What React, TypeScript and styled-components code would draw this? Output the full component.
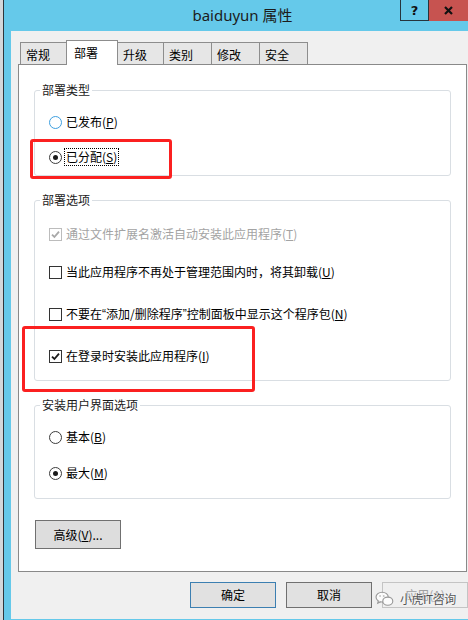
import styled, { createGlobalStyle } from 'styled-components';

const GlobalStyle = createGlobalStyle`
  html, body {
    margin: 0;
    padding: 0;
    background: #f0f0f0;
  }
`;

const Screen = styled.div`
  position: relative;
  width: 468px;
  height: 620px;
  display: flex;
  overflow: hidden;
  font-family: "Noto Sans CJK SC", sans-serif;
  font-size: 12px;
  color: #000;
`;

const DesktopEdge = styled.div`
  width: 3px;
  background: #d3d7da;
  border-right: 1px solid #2e363b;
`;

const Window = styled.div`
  flex: 1;
  display: flex;
  flex-direction: column;
  background: #65c9ea;
`;

const TitleBar = styled.div`
  height: 31px;
  display: flex;
  align-items: flex-start;
  flex-shrink: 0;
`;

const Title = styled.div`
  flex: 1;
  padding-left: 81px;
  line-height: 30px;
  text-align: center;
  font-family: "Noto Sans", "Noto Sans CJK SC", sans-serif;
  font-size: 15px;
  color: #1c1c1c;
`;

const CaptionButton = styled.div<{ $close?: boolean }>`
  box-sizing: border-box;
  width: ${p => (p.$close ? 39 : 29)}px;
  height: 21px;
  display: flex;
  align-items: center;
  justify-content: center;
  background: ${p => (p.$close ? '#c75350' : 'transparent')};
  border: ${p => (p.$close ? 'none' : '1px solid #26353d')};
  border-top: none;
  font-family: "DejaVu Sans", sans-serif;
  font-weight: bold;
  font-size: 13px;
  color: #111;
`;

const Client = styled.div`
  flex: 1;
  margin: 0 0 1px 7px;
  padding: 9px 1px 0 7px;
  background: #f0f0f0;
  display: flex;
  flex-direction: column;
`;

const TabStrip = styled.div`
  position: relative;
  z-index: 1;
  display: flex;
  align-items: flex-start;
  height: 25px;
  margin-bottom: -1px;
  padding-left: 2px;
`;

const Tab = styled.div<{ $w: number; $active?: boolean }>`
  box-sizing: border-box;
  width: ${p => p.$w}px;
  height: ${p => (p.$active ? 25 : 22)}px;
  margin-top: ${p => (p.$active ? 0 : 2)}px;
  margin-right: -1px;
  padding: ${p => (p.$active ? '2px 0 0 7px' : '2px 0 0 5px')};
  border: 1px solid #8d8d8d;
  border-bottom: none;
  background: ${p => (p.$active ? '#fff' : '#e6e6e6')};
  line-height: 19px;
`;

const Panel = styled.div`
  box-sizing: border-box;
  height: 508px;
  padding: 17px 15px 0;
  background: #fff;
  border: 1px solid #898989;
`;

const Group = styled.fieldset<{ $pt: number; $pb: number }>`
  margin: 0;
  min-width: 0;
  padding: ${p => p.$pt}px 14px ${p => p.$pb}px;
  border: 1px solid #d9dee3;
  border-radius: 3px;

  & + & {
    margin-top: 16px;
  }
`;

const GroupTitle = styled.legend`
  margin-left: -9px;
  padding: 0 2px;
  line-height: 16px;
  color: #1a1a1a;
`;

const Option = styled.div<{ $mt?: number; $disabled?: boolean }>`
  display: flex;
  align-items: center;
  height: 20px;
  margin-top: ${p => p.$mt ?? 0}px;
  color: ${p => (p.$disabled ? '#a3a3a3' : '#000')};
  line-height: 16px;
  white-space: nowrap;
`;

const Radio = styled.span<{ $checked?: boolean; $hot?: boolean }>`
  box-sizing: border-box;
  flex-shrink: 0;
  width: 13px;
  height: 13px;
  margin-right: 4px;
  border-radius: 50%;
  border: 1px solid ${p => (p.$hot ? '#3e9fe0' : '#3c3c3c')};
  background: #fff;
  display: flex;
  align-items: center;
  justify-content: center;

  &::after {
    content: '';
    display: ${p => (p.$checked ? 'block' : 'none')};
    width: 5px;
    height: 5px;
    border-radius: 50%;
    background: #1a1a1a;
  }
`;

const Check = styled.span<{ $disabled?: boolean }>`
  box-sizing: border-box;
  flex-shrink: 0;
  width: 13px;
  height: 13px;
  margin-right: 4px;
  border: 1px solid ${p => (p.$disabled ? '#bcbcbc' : '#333')};
  background: #fff;
  display: flex;
  align-items: center;
  justify-content: center;
`;

const FocusText = styled.span`
  margin-left: -2px;
  padding: 0 1px;
  border: 1px dotted #000;
`;

const Key = styled.u`
  text-underline-offset: 1px;
`;

const Quote = styled.span`
  font-family: "Liberation Sans", sans-serif;
`;

const Button = styled.button<{ $kind?: 'default' | 'normal' | 'disabled'; $w?: number; $h?: number }>`
  box-sizing: border-box;
  width: ${p => p.$w ?? 86}px;
  height: ${p => p.$h ?? 26}px;
  padding: 0;
  font: inherit;
  font-size: 12px;
  line-height: 16px;
  background: ${p => (p.$kind === 'disabled' ? '#efefef' : '#e1e1e1')};
  color: ${p => (p.$kind === 'disabled' ? '#a0a0a0' : '#000')};
  border: 1px solid
    ${p => (p.$kind === 'default' ? '#3c7fb1' : p.$kind === 'disabled' ? '#c4c4c4' : '#707070')};
  border-radius: 0;
`;

const AdvancedButton = styled(Button)`
  margin-top: 21px;
  margin-left: 1px;
  background: #dddddd;
`;

const ButtonRow = styled.div`
  display: flex;
  justify-content: flex-end;
  gap: 10px;
  margin: 10px -1px 0 0;
`;

const Callout = styled.div<{ $x: number; $y: number; $w: number; $h: number }>`
  position: absolute;
  left: ${p => p.$x}px;
  top: ${p => p.$y}px;
  width: ${p => p.$w}px;
  height: ${p => p.$h}px;
  box-sizing: border-box;
  border: 3px solid #fb2020;
  border-radius: 3px;
`;

const Watermark = styled.div`
  position: absolute;
  left: 375px;
  top: 590px;
  display: flex;
  align-items: center;
  gap: 6px;
  color: #3a3a3a;
  font-size: 12px;
  letter-spacing: -0.5px;
  opacity: 0.85;
  text-shadow: 0 0 2px #fff, 0 0 2px #fff;
`;

function CheckMark({ color }: { color: string }) {
  return (
    <svg width="9" height="9" viewBox="0 0 9 9">
      <path d="M1 4.6 L3.4 7 L8 1.6" fill="none" stroke={color} strokeWidth="1.8" />
    </svg>
  );
}

function WeChatMark() {
  return (
    <svg width="19" height="16" viewBox="0 0 20 17">
      <ellipse cx="7.5" cy="6.5" rx="6.5" ry="5.2" fill="#fff" stroke="#8a8a8a" strokeWidth="1.2" />
      <path d="M3.5 10.5 L2.8 13 L6 11.4" fill="#fff" stroke="#8a8a8a" strokeWidth="1.2" />
      <ellipse cx="13.5" cy="10.8" rx="5.3" ry="4.3" fill="#fff" stroke="#8a8a8a" strokeWidth="1.2" />
      <circle cx="5.3" cy="5.3" r="0.8" fill="#8a8a8a" />
      <circle cx="9.3" cy="5.3" r="0.8" fill="#8a8a8a" />
    </svg>
  );
}

const tabs = [
  { label: '常规', w: 47 },
  { label: '部署', w: 52, active: true },
  { label: '升级', w: 47 },
  { label: '类别', w: 49 },
  { label: '修改', w: 49 },
  { label: '安全', w: 49 },
];

export default function App() {
  return (
    <Screen>
      <GlobalStyle />
      <DesktopEdge />
      <Window>
        <TitleBar>
          <Title>baiduyun 属性</Title>
          <CaptionButton>?</CaptionButton>
          <CaptionButton $close>
            <svg width="9" height="9" viewBox="0 0 9 9">
              <path d="M1 1 L8 8 M8 1 L1 8" stroke="#111" strokeWidth="2.2" />
            </svg>
          </CaptionButton>
        </TitleBar>

        <Client>
          <TabStrip>
            {tabs.map(t => (
              <Tab key={t.label} $w={t.w} $active={t.active}>
                {t.label}
              </Tab>
            ))}
          </TabStrip>

          <Panel>
            <Group $pt={14} $pb={8}>
              <GroupTitle>部署类型</GroupTitle>
              <Option>
                <Radio $hot />
                已发布(<Key>P</Key>)
              </Option>
              <Option $mt={15}>
                <Radio $checked />
                <FocusText>
                  已分配(<Key>S</Key>)
                </FocusText>
              </Option>
            </Group>

            <Group $pt={16} $pb={14}>
              <GroupTitle>部署选项</GroupTitle>
              <Option $disabled>
                <Check $disabled>
                  <CheckMark color="#a8a8a8" />
                </Check>
                通过文件扩展名激活自动安装此应用程序(<Key>T</Key>)
              </Option>
              <Option $mt={18}>
                <Check />
                当此应用程序不再处于管理范围内时，将其卸载(<Key>U</Key>)
              </Option>
              <Option $mt={22}>
                <Check />
                不要在<Quote>“</Quote>添加/删除程序<Quote>”</Quote>控制面板中显示这个程序包(<Key>N</Key>)
              </Option>
              <Option $mt={22}>
                <Check>
                  <CheckMark color="#1a1a1a" />
                </Check>
                在登录时安装此应用程序(<Key>I</Key>)
              </Option>
            </Group>

            <Group $pt={14} $pb={15}>
              <GroupTitle>安装用户界面选项</GroupTitle>
              <Option>
                <Radio />
                基本(<Key>B</Key>)
              </Option>
              <Option $mt={16}>
                <Radio $checked />
                最大(<Key>M</Key>)
              </Option>
            </Group>

            <AdvancedButton $w={86} $h={29}>
              高级(<Key>V</Key>)...
            </AdvancedButton>
          </Panel>

          <ButtonRow>
            <Button $kind="default">确定</Button>
            <Button $kind="normal">取消</Button>
            <Button $kind="disabled">
              应用(<Key>A</Key>)
            </Button>
          </ButtonRow>
        </Client>
      </Window>

      <Callout $x={30} $y={139} $w={142} $h={40} />
      <Callout $x={22} $y={326} $w={233} $h={66} />

      <Watermark>
        <WeChatMark />
        小虎IT咨询
      </Watermark>
    </Screen>
  );
}
